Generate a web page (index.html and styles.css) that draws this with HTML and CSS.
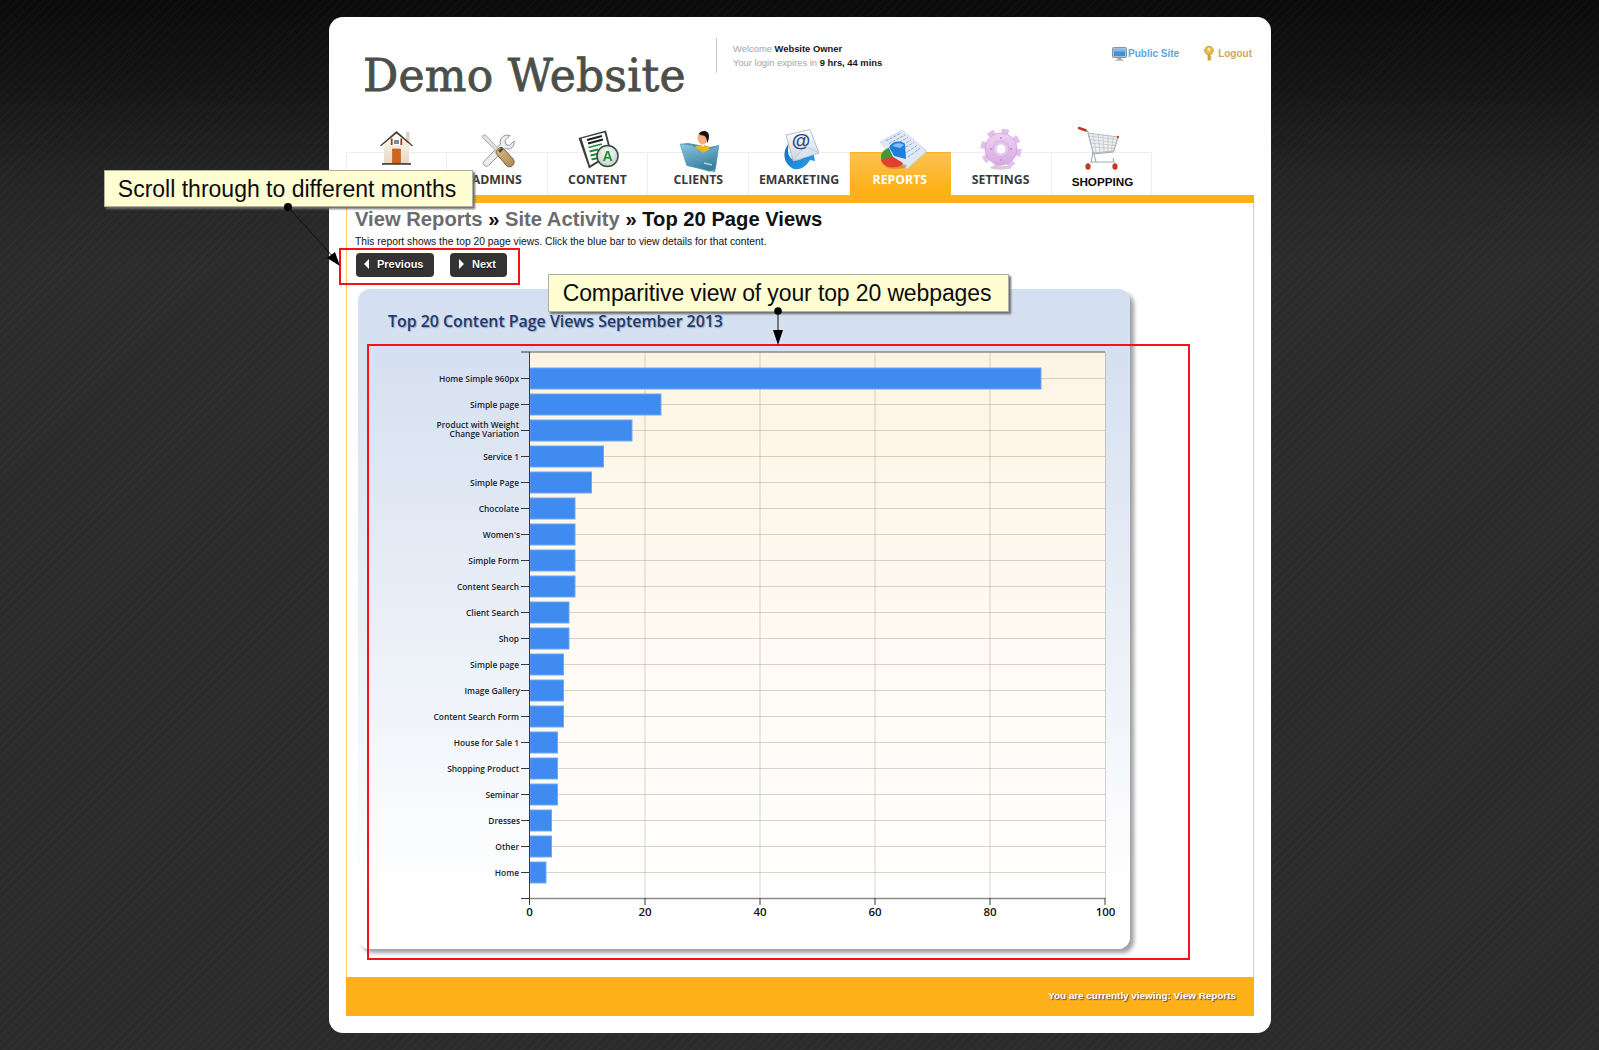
FILE: index.html
```html
<!DOCTYPE html>
<html lang="en">
<head>
<meta charset="utf-8">
<title>Demo Website - View Reports</title>
<link rel="stylesheet" href="styles.css">
</head>
<body>
<div class="panel">
  <header class="header">
    <div class="logo">Demo Website</div>
    <div class="welcome">
      <div>Welcome <b>Website Owner</b></div>
      <div>Your login expires in <b>9 hrs, 44 mins</b></div>
    </div>
    <div class="links">
      <a class="link link-blue">
        <svg class="link-icon" width="15" height="14" viewBox="0 0 15 14"><rect x="0.5" y="0.5" width="14" height="10" rx="1" fill="#b4bcc4" stroke="#8b939b"/><rect x="2" y="2" width="11" height="7" fill="#3f8fdc"/><rect x="2" y="2" width="11" height="2.5" fill="#7fb9ec"/><rect x="5.5" y="11" width="4" height="2" fill="#9aa2aa"/><rect x="3.5" y="12.6" width="8" height="1.4" fill="#b8bfc6"/></svg>
        Public Site</a>
      <a class="link link-gold">
        <svg class="link-icon" width="10" height="15" viewBox="0 0 10 15"><circle cx="5" cy="4.5" r="4.3" fill="#e9c04c" stroke="#b48d2a" stroke-width="0.8"/><circle cx="5" cy="3.4" r="1.3" fill="#fff2b8"/><rect x="3.6" y="8" width="2.8" height="6.5" fill="#c9a23a"/><rect x="6.2" y="10.5" width="1.6" height="1.2" fill="#c9a23a"/><rect x="6.2" y="12.6" width="1.2" height="1.2" fill="#c9a23a"/></svg>
        Logout</a>
    </div>
  </header>

  <nav class="tabs">
    <div class="tab">
      <div class="slot"><svg class="tab-icon icon-home" width="33" height="36" viewBox="0 0 33 36">
        <defs><linearGradient id="wall" x1="0" y1="0" x2="0" y2="1"><stop offset="0" stop-color="#fffaf0"/><stop offset="1" stop-color="#e3d8c2"/></linearGradient></defs>
        <rect x="26" y="2" width="3.5" height="11" fill="#dcd3bb"/>
        <path d="M4 15 16.500 4.500 29 15V33H4Z" fill="url(#wall)"/>
        <path d="M0 15.500 16.500 1 33 15.500 32 16.200 16.500 3.500 1 16.200Z" fill="#4a3c33"/>
        <rect x="12.500" y="8.500" width="8" height="6.500" fill="#fff"/><rect x="14" y="10" width="5" height="4" fill="#7d8b92"/>
        <rect x="10.800" y="8.500" width="1.800" height="6.500" fill="#a8382c"/><rect x="20.400" y="8.500" width="1.800" height="6.500" fill="#a8382c"/>
        <rect x="12.500" y="19" width="8" height="14" fill="#d0651c" stroke="#a04e14" stroke-width="0.5"/>
        <rect x="2" y="33" width="29" height="1.800" fill="#4d4840"/>
      </svg></div>
    </div>
    <div class="tab">
      <div class="slot"><svg class="tab-icon icon-tools" width="35" height="36" viewBox="0 0 35 36">
        <defs><linearGradient id="handle" x1="0" y1="0" x2="1" y2="1"><stop offset="0" stop-color="#d8bd84"/><stop offset="1" stop-color="#a98a52"/></linearGradient></defs>
        <path d="M30 2.500 25 7.500 26 11.500 29.500 12.500 34 8C35 13 31 17.500 25.500 15.500L8.500 32.500C6 35 1.500 31 4 28.500L20.500 11C18.500 5.500 24.500 0.500 30 2.500Z" fill="#eceff1" stroke="#8d9499" stroke-width="1"/>
        <path d="M2 3.500 4 1.500 7 3.500 19 16.500 17 18.500 4.500 6.500Z" fill="#dfe3e6" stroke="#8d9499" stroke-width="0.8"/>
        <path d="M18.500 15.500C20 14 22 14 23.500 15.500L33 26C35 28 34 31 32.500 32.500 30.500 34.500 28 34 26.500 32.500L17 21.500C15 19.500 16.500 17 18.500 15.500Z" fill="url(#handle)" stroke="#6f5a35" stroke-width="1"/>
        <path d="M18 17.500 21.500 14.500 23.500 16.500 20 20Z" fill="#5d4c2c"/>
      </svg></div>
      <span class="tab-label">ADMINS</span>
    </div>
    <div class="tab">
      <div class="slot"><svg class="tab-icon icon-doc" width="41" height="39" viewBox="0 0 41 39">
        <defs><radialGradient id="bubble" cx="0.5" cy="0.4" r="0.6"><stop offset="0" stop-color="#fff"/><stop offset="1" stop-color="#bcd6c4"/></radialGradient></defs>
        <path d="M0.500 8 28 0.500 34 24 11 38.500Z" fill="#3b3f3c"/>
        <path d="M3.500 8.500 26.500 2.500 32 23 12 35.500Z" fill="#fff"/>
        <path d="M9 10 24 6M10 13.500 25 9.500" stroke="#1d211e" stroke-width="2.200" fill="none"/>
        <path d="M10.500 17.500 24 14M11.500 21.500 20 19.500M12.500 25.500 19 24M13.500 29.500 20 28" stroke="#1f8a3b" stroke-width="1.800" fill="none"/>
        <circle cx="29.500" cy="26" r="10.500" fill="url(#bubble)" stroke="#3d4440" stroke-width="1.500"/>
        <text class="doc-letter" x="29.500" y="31" text-anchor="middle">A</text>
      </svg></div>
      <span class="tab-label">CONTENT</span>
    </div>
    <div class="tab">
      <div class="slot"><svg class="tab-icon icon-folder" width="41" height="42" viewBox="0 0 41 42">
        <defs><linearGradient id="fold" x1="0" y1="0" x2="0.4" y2="1"><stop offset="0" stop-color="#8cc7de"/><stop offset="1" stop-color="#397f9f"/></linearGradient></defs>
        <path d="M1 14 9 13 31 17 40 15 36 42 8 36Z" fill="#4d93b3"/>
        <path d="M13 22 17 16 24 14.500 30 16.500 31.500 24Z" fill="#f0b61c"/>
        <path d="M21 12h6l-3 5z" fill="#fff"/>
        <ellipse cx="23.500" cy="8" rx="5" ry="6.500" fill="#f3ad80"/>
        <path d="M20 3.500C22 0 30 -0.500 30 6 30 9 29 12 28 13 28 9 27 6 24 5.500 22 5 20.500 5 20 3.500Z" fill="#17130f"/>
        <path d="M1 14 13 15.500 24 23 40 15 36.500 39 31 41.500 7.500 35Z" fill="url(#fold)" stroke="#6aa6c0" stroke-width="0.5"/>
        <path d="M25 33 33 35" stroke="#a9d4e4" stroke-width="1.500"/>
      </svg></div>
      <span class="tab-label">CLIENTS</span>
    </div>
    <div class="tab">
      <div class="slot"><svg class="tab-icon icon-mail" width="36" height="41" viewBox="0 0 36 41">
        <defs><linearGradient id="swoosh" x1="0" y1="0" x2="1" y2="1"><stop offset="0" stop-color="#0f6cc0"/><stop offset="1" stop-color="#2ea3ea"/></linearGradient><linearGradient id="env" x1="0" y1="0" x2="0" y2="1"><stop offset="0" stop-color="#fff"/><stop offset="1" stop-color="#c7d3e3"/></linearGradient></defs>
        <path d="M6 14C-2 24 1 36 11 40 19 41 23 37 27 31L32 32 30 22 20 24 23 27C19 31 11 34 7 28 4 24 5 18 6 14Z" fill="url(#swoosh)"/>
        <path d="M3 6 27 0.500 36 24 10 32Z" fill="url(#env)" stroke="#9aa8bb" stroke-width="0.7"/>
        <path d="M10 32 22 17 36 24Z" fill="#dbe4ee" stroke="#a8b5c6" stroke-width="0.5"/>
        <text class="mail-at" x="18" y="17.500" text-anchor="middle">@</text>
      </svg></div>
      <span class="tab-label">EMARKETING</span>
    </div>
    <div class="tab tab-active">
      <div class="slot"><svg class="tab-icon icon-report" width="47" height="39" viewBox="0 0 47 39">
        <path d="M0 12 22 0 47 21 27 39 13 27Z" fill="#dfe9f6" stroke="#b6c7de" stroke-width="0.6"/>
        <path d="M6 11 21 3M9 13.500 25 5M12 16 28 7.500M15 18.500 31 10M18 21 34 12.500M24 24 37 15.500M28 27 40 18.500" stroke="#8ca4c6" stroke-width="1" stroke-dasharray="3 1.200" fill="none"/>
        <ellipse cx="16" cy="36" rx="11" ry="3" fill="#b3341f" opacity="0.35"/>
        <path d="M1 30C2 26 6 24 10 25L23 33C21 37 14 38 9 37 5 36 2 34 1 30Z" fill="#e1402c"/>
        <path d="M1 29C0 24 4 19 9 18L13 27 1 29Z" fill="#3f9a3c"/>
        <path d="M9 17C13 11 20 10 25 14L26 29 14 26Z" fill="#1f7fe0"/>
        <path d="M12 16C15 13 20 12 24 15L20 18Z" fill="#7fc1f5"/>
      </svg></div>
      <span class="tab-label">REPORTS</span>
    </div>
    <div class="tab">
      <div class="slot"><svg class="tab-icon icon-gear" width="42" height="41" viewBox="0 0 42 41">
        <defs><linearGradient id="gear" x1="0" y1="0" x2="0" y2="1"><stop offset="0" stop-color="#edd2f0"/><stop offset="1" stop-color="#d9a9e4"/></linearGradient></defs>
        <ellipse cx="21" cy="38.500" rx="11" ry="2" fill="#b8b2a8" opacity="0.6"/>
        <circle cx="21" cy="20" r="17.500" fill="none" stroke="#e2c0ec" stroke-width="6" stroke-dasharray="6.900 6.845"/>
        <circle cx="21" cy="20" r="16" fill="url(#gear)" stroke="#cfa0dc" stroke-width="0.8"/>
        <circle cx="21" cy="20" r="8" fill="#e6c6ec" stroke="#cda2da" stroke-width="0.7"/>
        <circle cx="21" cy="20" r="4.500" fill="#fff"/>
        <circle cx="21" cy="9" r="1" fill="#b98ac8"/><circle cx="21" cy="31" r="1" fill="#b98ac8"/><circle cx="11" cy="20" r="1" fill="#b98ac8"/><circle cx="31" cy="20" r="1" fill="#b98ac8"/>
      </svg></div>
      <span class="tab-label">SETTINGS</span>
    </div>
    <div class="tab">
      <div class="slot"><svg class="tab-icon icon-cart" width="41" height="43" viewBox="0 0 41 43">
        <path d="M1 1 8 3.500" stroke="#c23a1c" stroke-width="2.600" stroke-linecap="round"/>
        <path d="M8 3.500 10 5 15 24 13 36M15 24 18 35M13 35 36 35 35 31M15 27 35 25 40 10" stroke="#a4a9ac" stroke-width="1.100" fill="none"/>
        <path d="M10 6 40 10 36 24 15 26Z" fill="#e5e8ea" fill-opacity="0.7" stroke="#a4a9ac" stroke-width="0.8"/>
        <path d="M11 9 39 12.500M12 12.500 38 15.500M13 16 37.500 18.500M14 20 36.500 21.500M15 6.500 18 25.500M20 7 22 25M25 8 26 25M30 8.500 30 24.500M35 9.500 33.500 24.500" stroke="#b6babd" stroke-width="0.6" fill="none"/>
        <circle cx="40" cy="10" r="1.200" fill="#c23a1c"/>
        <ellipse cx="10" cy="39.500" rx="2.600" ry="3.300" fill="#c43c1e"/><ellipse cx="37" cy="39.500" rx="2.600" ry="3.300" fill="#c43c1e"/>
      </svg></div>
      <span class="tab-label tab-label-shop">SHOPPING</span>
    </div>
  </nav>

  <div class="bar"></div>

  <main class="content">
    <h1 class="crumbs"><span class="crumb">View Reports</span> » <span class="crumb">Site Activity</span> » Top 20 Page Views</h1>
    <p class="desc">This report shows the top 20 page views. Click the blue bar to view details for that content.</p>
    <div class="pager">
      <a class="btn btn-prev"><i class="tri tri-left"></i>Previous</a>
      <a class="btn btn-next"><i class="tri tri-right"></i>Next</a>
    </div>
    <section class="chart-card">
      <h2 class="chart-title">Top 20 Content Page Views September 2013</h2>
      <svg class="chart" width="774" height="590" viewBox="358 345 774 590">
        <defs><linearGradient id="plot" x1="0" y1="0" x2="0" y2="1"><stop offset="0" stop-color="#fdf4e4"/><stop offset="1" stop-color="#ffffff"/></linearGradient></defs>
        <rect x="530" y="352" width="575" height="546" fill="url(#plot)"/>
        <g class="grid">
          <path d="M645 352V898M760 352V898M875 352V898M990 352V898M1105.500 352V898"/>
          <path d="M530 378.500H1105M530 404.500H1105M530 430.500H1105M530 456.500H1105M530 482.500H1105M530 508.500H1105M530 534.500H1105M530 560.500H1105M530 586.500H1105M530 612.500H1105M530 638.500H1105M530 664.500H1105M530 690.500H1105M530 716.500H1105M530 742.500H1105M530 768.500H1105M530 794.500H1105M530 820.500H1105M530 846.500H1105M530 872.500H1105"/>
        </g>
        <path class="axis-soft" d="M530 352H1105M530 898.500H1105"/>
        <g class="bars">
          <rect x="530" y="368" width="511" height="21"/>
          <rect x="530" y="394" width="131" height="21"/>
          <rect x="530" y="420" width="102" height="21"/>
          <rect x="530" y="446" width="73.500" height="21"/>
          <rect x="530" y="472" width="61.500" height="21"/>
          <rect x="530" y="498" width="45" height="21"/>
          <rect x="530" y="524" width="45" height="21"/>
          <rect x="530" y="550" width="45" height="21"/>
          <rect x="530" y="576" width="45" height="21"/>
          <rect x="530" y="602" width="39" height="21"/>
          <rect x="530" y="628" width="39" height="21"/>
          <rect x="530" y="654" width="33.500" height="21"/>
          <rect x="530" y="680" width="33.500" height="21"/>
          <rect x="530" y="706" width="33.500" height="21"/>
          <rect x="530" y="732" width="27.500" height="21"/>
          <rect x="530" y="758" width="27.500" height="21"/>
          <rect x="530" y="784" width="27.500" height="21"/>
          <rect x="530" y="810" width="21.500" height="21"/>
          <rect x="530" y="836" width="21.500" height="21"/>
          <rect x="530" y="862" width="16" height="21"/>
        </g>
        <path class="axis" d="M529.500 352V898M521 352H530M521 898.500H530M529.500 898V905M645 898V905M760 898V905M875 898V905M990 898V905M1105 898V905"/>
        <path class="axis" d="M521 378.500H529M521 404.500H529M521 430.500H529M521 456.500H529M521 482.500H529M521 508.500H529M521 534.500H529M521 560.500H529M521 586.500H529M521 612.500H529M521 638.500H529M521 664.500H529M521 690.500H529M521 716.500H529M521 742.500H529M521 768.500H529M521 794.500H529M521 820.500H529M521 846.500H529M521 872.500H529"/>
        <g class="row-labels">
          <text x="519" y="381.500">Home Simple 960px</text>
          <text x="519" y="407.500">Simple page</text>
          <text x="519" y="427.500">Product with Weight</text>
          <text x="519" y="437">Change Variation</text>
          <text x="519" y="459.500">Service 1</text>
          <text x="519" y="485.500">Simple Page</text>
          <text x="519" y="511.500">Chocolate</text>
          <text x="520" y="537.500">Women's</text>
          <text x="519" y="563.500">Simple Form</text>
          <text x="519" y="589.500">Content Search</text>
          <text x="519" y="615.500">Client Search</text>
          <text x="519" y="641.500">Shop</text>
          <text x="519" y="667.500">Simple page</text>
          <text x="520" y="693.500">Image Gallery</text>
          <text x="519" y="719.500">Content Search Form</text>
          <text x="519" y="745.500">House for Sale 1</text>
          <text x="519" y="771.500">Shopping Product</text>
          <text x="519" y="797.500">Seminar</text>
          <text x="520" y="823.500">Dresses</text>
          <text x="519" y="849.500">Other</text>
          <text x="519" y="875.500">Home</text>
        </g>
        <g class="x-labels">
          <text x="529.500" y="916">0</text>
          <text x="645" y="916">20</text>
          <text x="760" y="916">40</text>
          <text x="875" y="916">60</text>
          <text x="990" y="916">80</text>
          <text x="1105.500" y="916">100</text>
        </g>
      </svg>
    </section>
  </main>

  <footer class="footer">You are currently viewing: View Reports</footer>
</div>

<div class="mark mark-pager"></div>
<div class="mark mark-chart"></div>
<div class="callout callout-months">Scroll through to different months</div>
<div class="callout callout-top">Comparitive view of your top 20 webpages</div>
<svg class="arrows" width="1599" height="1050" viewBox="0 0 1599 1050">
  <circle cx="288" cy="207" r="4"/>
  <path class="arrow-line" d="M288 207 335 259"/>
  <path d="M327 258 335 252 340 266Z"/>
  <circle cx="778" cy="311" r="3.800"/>
  <path class="arrow-line" d="M778 311V331"/>
  <path d="M773 330H783L778 345Z"/>
</svg>
</body>
</html>
```
FILE: styles.css
```css
* { box-sizing: border-box; }
html, body { margin: 0; height: 1050px; overflow: hidden; }
body {
  position: relative;
  padding-top: 17px;
  font-family: "Liberation Sans", Arial, sans-serif;
  background:
    repeating-linear-gradient(135deg, rgba(255,255,255,.015) 0 2px, rgba(0,0,0,.02) 2px 6px),
    linear-gradient(#0b0b0b 0, #141414 80px, #242424 170px, #2c2c2c 260px);
}
.panel {
  width: 942px;
  height: 1016px;
  margin-left: 329px;
  padding: 0 17px 0 17px;
  background: #fff;
  border-radius: 14px;
  display: flex;
  flex-direction: column;
}
.header { height: 135px; display: flex; align-items: flex-start; }
.logo {
  width: 353px;
  margin: 31px 0 0 17px;
  font-family: "DejaVu Serif", serif;
  font-size: 44px;
  line-height: 56px;
  letter-spacing: .25px;
  color: #4c4f49;
  -webkit-text-stroke: .8px #4c4f49;
  white-space: nowrap;
}
.welcome {
  margin-top: 21px;
  height: 35px;
  padding: 4px 0 0 16px;
  border-left: 1px solid #ccc;
  font-size: 9.4px;
  line-height: 14px;
  color: #a4a4a4;
  white-space: nowrap;
}
.welcome b { color: #16161c; }
.links { margin: 29px 0 0 auto; display: flex; gap: 25px; padding-right: 2px; }
.link { display: flex; align-items: center; gap: 1px; font-size: 10px; font-weight: 700; line-height: 15px; }
.link-blue { color: #5aa6e2; }
.link-gold { color: #d2a850; gap: 4px; }
.tabs { display: flex; height: 43px; }
.tab {
  width: 100.8px;
  height: 43px;
  border-top: 1px solid #eee;
  border-right: 1px solid #eee;
  display: flex;
  flex-direction: column;
  align-items: center;
}
.tab:first-child { border-left: 1px solid #eee; }
.tab-active { background: linear-gradient(#fdc252, #fdb119 85%); border-color: transparent; }
.slot { height: 18px; width: 100%; display: flex; justify-content: center; align-items: flex-start; }
.tab-icon { flex: none; display: block; }
.icon-home { margin-top: -23px; }
.icon-tools { margin-top: -20px; margin-left: 2px; }
.icon-doc { margin-top: -23px; margin-left: 2px; }
.icon-folder { margin-top: -23px; margin-left: 3px; }
.icon-mail { margin-top: -24px; margin-left: 3px; }
.icon-report { margin-top: -23px; margin-left: 7px; }
.icon-gear { margin-top: -24px; }
.icon-cart { margin-top: -26px; margin-left: -5px; }
.tab-label {
  font-family: "Open Sans", sans-serif;
  font-weight: 700;
  font-size: 12.3px;
  line-height: 18px;
  color: #3a3a3a;
}
.tab-active .tab-label { color: #fff; }
.tab-label-shop { font-family: "Liberation Sans", sans-serif; font-size: 11.7px; color: #0c0c0c; margin: 2px 0 0 2px; }
.bar { height: 8px; background: #fdb017; }
.content {
  height: 774px;
  border-left: 1px solid #fdc76a;
  border-right: 1px solid #fdc76a;
  padding: 4px 0 0 8px;
}
.crumbs { margin: 0; font-size: 20.2px; line-height: 24px; font-weight: 700; color: #111; white-space: nowrap; }
.crumb { color: #6b6b6b; }
.desc { margin: 4px 0 0; font-size: 10.3px; line-height: 14px; color: #111; white-space: nowrap; }
.pager { display: flex; gap: 16px; margin: 4px 0 0 1px; }
.btn {
  height: 24px;
  border-radius: 4px;
  background: #333;
  color: #fff;
  font-size: 11px;
  font-weight: 700;
  padding-bottom: 2px;
  display: flex;
  align-items: center;
  text-shadow: 0 1px 1px #000;
}
.btn-prev { width: 78px; padding-left: 8px; }
.btn-next { width: 57px; padding-left: 9px; }
.tri { width: 0; height: 0; border-top: 5px solid transparent; border-bottom: 5px solid transparent; margin-right: 8px; }
.tri-left { border-right: 5px solid #fff; }
.tri-right { border-left: 5px solid #fff; margin-right: 8px; }
.chart-card {
  width: 772px;
  height: 660px;
  margin: 12px 0 0 3px;
  border-radius: 12px;
  background: linear-gradient(#d3dff0 0, #d8e2f1 15%, #ffffff 92%);
  box-shadow: 4px 4px 4px #a0a0a0;
}
.chart-title {
  margin: 0;
  padding: 21px 0 0 30px;
  height: 56px;
  font-family: "Open Sans", sans-serif;
  font-weight: 600;
  font-size: 15.9px;
  line-height: 22px;
  color: #1f3b70;
  text-shadow: 1px 1px 1px rgba(40,60,110,.35);
  white-space: nowrap;
}
.chart { display: block; font-family: "Open Sans", sans-serif; }
.grid path { stroke: #8c8678; stroke-opacity: .35; stroke-width: 1; fill: none; }
.axis-soft { stroke: #8a8a8a; stroke-width: 1.500; fill: none; }
.bars rect { fill: #3f8bef; stroke: #6ea8f3; stroke-width: 1; }
.axis { stroke: #3a3a3a; stroke-width: 1; fill: none; }
.row-labels text { font-size: 8.4px; font-weight: 600; fill: #20242e; text-anchor: end; }
.x-labels text { font-size: 11.5px; font-weight: 600; fill: #111; text-anchor: middle; }
.doc-letter { font-family: "Liberation Sans", sans-serif; font-size: 14px; font-weight: 700; fill: #1f8a3b; }
.mail-at { font-family: "Liberation Sans", sans-serif; font-size: 19px; font-weight: 700; fill: #2c4580; }
.footer {
  height: 39px;
  background: #fdb017;
  color: #fff;
  font-size: 9.9px;
  font-weight: 700;
  line-height: 38px;
  text-align: right;
  padding-right: 18px;
  text-shadow: 1px 1px 1px #4a4a4a;
}
.mark { position: absolute; border: 2px solid #f5131a; }
.mark-pager { left: 339px; top: 248px; width: 181px; height: 37px; }
.mark-chart { left: 367px; top: 344px; width: 823px; height: 616px; }
.arrows { position: absolute; left: 0; top: 0; pointer-events: none; }
.arrows circle, .arrows path { fill: #000; }
.arrows .arrow-line { fill: none; stroke: #111; stroke-width: 1; }
.callout {
  position: absolute;
  background: #fffed2;
  border: 1px solid #b0b0a0;
  box-shadow: 2px 2px 2px #6d6d6d;
  color: #0c0c0c;
  font-size: 23px;
  white-space: nowrap;
  text-align: center;
}
.callout-months { left: 104px; top: 170px; width: 369px; height: 37px; line-height: 36px; padding-right: 3px; }
.callout-top { left: 548px; top: 274px; width: 461px; height: 38px; line-height: 36px; letter-spacing: -.12px; padding-right: 3px; }
```
